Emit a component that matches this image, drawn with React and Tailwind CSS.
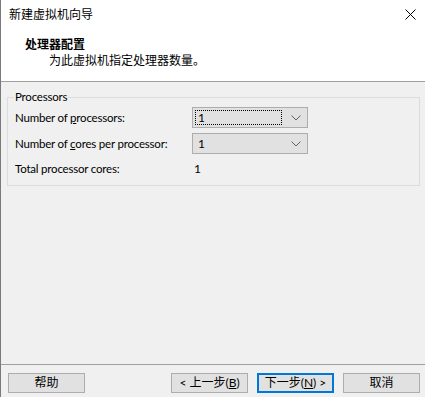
import React from "react";

const ui = { fontFamily: 'Lato, "Noto Sans CJK SC", sans-serif' };
const en = "text-[11.5px] tracking-[-0.2px] text-black whitespace-nowrap";

const Chevron = () => (
  <svg width="10" height="6" viewBox="0 0 10 6" className="text-[#606060]">
    <path d="M0.5 0.5 L5 5 L9.5 0.5" fill="none" stroke="currentColor" strokeWidth="1" />
  </svg>
);

const Select = ({ value, focused }) => (
  <div className="w-[116px] h-[21px] shrink-0 bg-[#e1e1e1] border border-[#adadad] flex items-center pl-[2px] pr-[6px]">
    <div
      className={
        "flex-1 h-[15px] flex items-center pl-[2px] text-[12px] leading-none text-black " +
        (focused ? "border border-dotted border-black" : "border border-transparent")
      }
    >
      {value}
    </div>
    <div className="ml-[9px]">
      <Chevron />
    </div>
  </div>
);

const Button = ({ children, primary }) => (
  <button
    className={
      "w-[77px] h-[20px] bg-[#e1e1e1] text-[12px] leading-none text-black flex items-center justify-center whitespace-nowrap " +
      (primary ? "border-2 border-[#0078d7]" : "border border-[#adadad]")
    }
  >
    {children}
  </button>
);

const App = () => {
  return (
    <div className="w-[425px] h-[397px] bg-[#f0f0f0] border-l border-[#7a7a7a] flex flex-col overflow-hidden" style={ui}>
      <div className="h-[82px] bg-white border-b border-[#a0a0a0] flex flex-col">
        <div className="h-[29px] flex items-center justify-between pl-[8px] pr-[9px]">
          <span className="text-[12px] text-black">新建虚拟机向导</span>
          <svg width="11" height="11" viewBox="0 0 11 11">
            <path d="M0.5 0.5 L10.5 10.5 M10.5 0.5 L0.5 10.5" stroke="#000" strokeWidth="1" />
          </svg>
        </div>
        <div className="pl-[24px] mt-[8px] text-[12px] font-bold leading-[16px] text-black">处理器配置</div>
        <div className="pl-[48px] text-[12px] leading-[16px] text-black">为此虚拟机指定处理器数量。</div>
      </div>

      <div className="flex-1 pt-[8px] pl-[6px] pr-[5px]">
        <fieldset className="border border-[#dcdcdc] h-[96px] pl-[7px] pr-[4px]">
          <legend className={en + " leading-[14px] px-[1px] -ml-[1px]"}>Processors</legend>
          <div className="flex items-center h-[21px] mt-[3px]">
            <span className={en + " w-[177px] shrink-0"}>
              Number of <span className="underline">p</span>rocessors:
            </span>
            <Select value="1" focused />
          </div>
          <div className="flex items-center h-[21px] mt-[5px]">
            <span className={en + " w-[177px] shrink-0"}>
              Number of <span className="underline">c</span>ores per processor:
            </span>
            <Select value="1" />
          </div>
          <div className="flex items-center h-[16px] mt-[7px]">
            <span className={en + " w-[179px] shrink-0"}>Total processor cores:</span>
            <span className="text-[12px] text-black">1</span>
          </div>
        </fieldset>
      </div>

      <div className="h-[33px] border-t border-[#a0a0a0] flex items-start pt-[8px] pl-[7px] pr-[5px]">
        <Button>帮助</Button>
        <div className="flex-1" />
        <div className="flex gap-[9px]">
          <Button>
            &lt; 上一步(<span className="underline">B</span>)
          </Button>
          <Button primary>
            下一步(<span className="underline">N</span>) &gt;
          </Button>
          <Button>取消</Button>
        </div>
      </div>
    </div>
  );
};

export default App;
